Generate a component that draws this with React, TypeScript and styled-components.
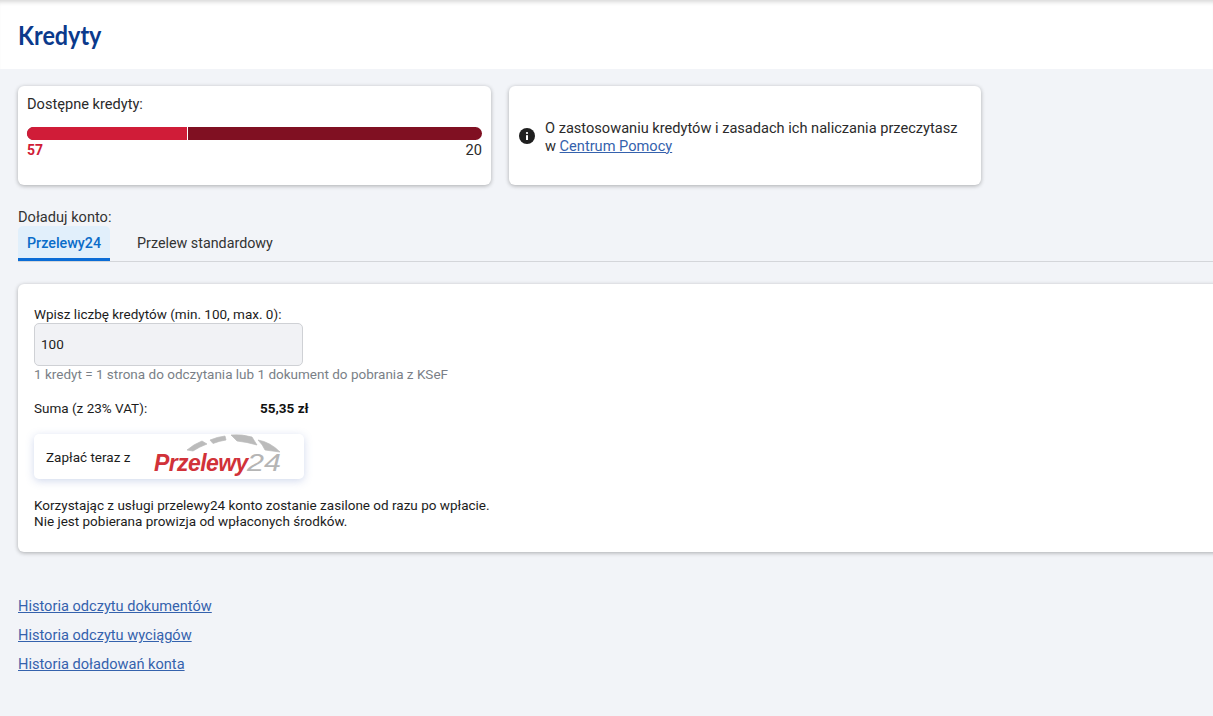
import React from "react";
import styled, { createGlobalStyle } from "styled-components";

const Global = createGlobalStyle`
  html, body { margin: 0; padding: 0; height: 716px; overflow: hidden; background: #f2f4f8; }
  body { font-family: Roboto, "Liberation Sans", sans-serif; font-size: 14.6px; color: #212529; }
`;

const Page = styled.div`
  width: 1213px;
  height: 716px;
  overflow: hidden;
  display: flex;
  flex-direction: column;
`;

const Header = styled.header`
  height: 69px;
  flex: none;
  box-sizing: border-box;
  background: #fff;
  padding: 18px 18px 0;
  box-shadow: inset 0 5px 4px -3px rgba(0, 0, 0, 0.16);
`;

const Title = styled.h1`
  margin: 0;
  font-family: Lato, sans-serif;
  font-size: 27px;
  line-height: 34px;
  font-weight: 700;
  color: #0b3a8c;
  transform: scaleX(0.865);
  transform-origin: left center;
`;

const Main = styled.main`
  padding: 17px 0 0 18px;
  display: flex;
  flex-direction: column;
`;

const TopRow = styled.div`
  display: flex;
  gap: 18px;
`;

const Card = styled.section`
  background: #fff;
  border-radius: 6px;
  box-shadow: 0 1px 4px rgba(0, 0, 0, 0.3);
  box-sizing: border-box;
`;

const CreditsCard = styled(Card)`
  width: 473px;
  height: 99px;
  padding: 10px 9px 0;
`;

const CardLabel = styled.div`
  line-height: 17px;
  color: #2b2b2b;
`;

const Bar = styled.div`
  display: flex;
  height: 13px;
  margin-top: 14px;
  border-radius: 7px;
  overflow: hidden;
  background: #801022;
`;

const BarUsed = styled.div`
  width: 160px;
  background: #d01c38;
  border-right: 1px solid #fff;
`;

const BarLabels = styled.div`
  display: flex;
  justify-content: space-between;
  line-height: 17px;
  margin-top: 2px;
`;

const Used = styled.span`
  color: #d01c38;
  font-weight: 700;
  font-size: 14px;
`;

const Total = styled.span`
  color: #2b2b2b;
`;

const InfoCard = styled(Card)`
  width: 472px;
  height: 99px;
  padding: 0 10px;
  display: flex;
  align-items: center;
  gap: 10px;
`;

const InfoText = styled.div`
  padding-top: 2px;
  line-height: 18px;
  color: #2b2b2b;
`;

const TextLink = styled.a`
  color: #3562ad;
  text-decoration: underline;
`;

const SectionLabel = styled.div`
  margin-top: 24px;
  line-height: 17px;
  color: #333;
`;

const Tabs = styled.div`
  display: flex;
  height: 36px;
  box-sizing: border-box;
  border-bottom: 1px solid #d4d6da;
  align-items: stretch;
`;

const Tab = styled.div<{ $active?: boolean }>`
  padding: 2px 9px 0;
  margin-right: 18px;
  display: flex;
  align-items: center;
  height: 35px;
  box-sizing: border-box;
  border-radius: 5px 5px 0 0;
  font-size: 14.3px;
  font-weight: ${(p) => (p.$active ? 500 : 400)};
  color: ${(p) => (p.$active ? "#0a6cc9" : "#333")};
  background: ${(p) => (p.$active ? "#e1effb" : "transparent")};
  border-bottom: 3px solid ${(p) => (p.$active ? "#0a6cd6" : "transparent")};
`;

const PayCard = styled(Card)`
  margin-top: 22px;
  margin-right: -20px;
  height: 268px;
  padding: 23px 16px 0;
  font-size: 13.5px;
`;

const FieldLabel = styled.label`
  display: block;
  line-height: 15px;
  color: #1c1c1c;
`;

const AmountInput = styled.input`
  display: block;
  margin-top: 1px;
  width: 269px;
  height: 43px;
  box-sizing: border-box;
  padding: 0 6px 2px;
  background: #f1f2f5;
  border: 1px solid #cfd1d5;
  border-radius: 5px;
  font: 13.5px Roboto, sans-serif;
  color: #222;
`;

const Hint = styled.div`
  line-height: 16px;
  color: #7a7f87;
`;

const SumRow = styled.div`
  display: flex;
  margin-top: 18px;
  line-height: 17px;
  color: #1c1c1c;
`;

const SumLabel = styled.span`
  width: 226px;
`;

const SumValue = styled.strong`
  font-weight: 700;
  color: #111;
`;

const PayButton = styled.button`
  display: flex;
  align-items: center;
  margin-top: 17px;
  width: 270px;
  height: 45px;
  padding: 0 0 0 12px;
  border: 0;
  border-radius: 5px;
  background: #fff;
  box-shadow: 0 2px 8px rgba(90, 120, 190, 0.28);
  font: 13.5px Roboto, sans-serif;
  color: #1c1c1c;
`;

const PayNote = styled.p`
  margin: 18px 0 0;
  line-height: 16px;
  color: #1c1c1c;
`;

const HistoryLinks = styled.nav`
  display: flex;
  flex-direction: column;
  align-items: flex-start;
  gap: 12px;
  margin-top: 46px;
  line-height: 17px;
`;

const LogoSvg = styled.svg`
  display: block;
  flex: none;
  margin-left: auto;
  margin-right: 19px;
`;

const InfoIcon = () => (
  <svg width="16" height="16" viewBox="0 0 16 16" style={{ flex: "none" }}>
    <circle cx="8" cy="8" r="8" fill="#1f1f1f" />
    <rect x="7" y="7.2" width="2" height="4.8" fill="#fff" />
    <circle cx="8" cy="5" r="1.1" fill="#fff" />
  </svg>
);

const P24Logo = () => (
  <LogoSvg width="132" height="45" viewBox="0 1 132 45">
    <g fill="#bbbbbb" stroke="#bbbbbb" strokeWidth="0.7" strokeLinejoin="round">
      <path d="M34 17 Q41 11 49 8 L54 11 Q46 14 40 18 Z" />
      <path d="M57 7 Q64 4 72 3 L73 7 Q66 8 60 10.5 Z" />
      <path d="M78 2 Q89 1 99 4 L104 12 Q94 9 84 8 Z" />
      <path d="M105 7 Q117 9 127 19 L112 17 Q110 12 105 7 Z" />
    </g>
    <text x="1" y="38" fontFamily="Liberation Sans, sans-serif" fontStyle="italic" fontWeight="700" fontSize="23" letterSpacing="-0.6" fill="#d13239">
      Przelewy
    </text>
    <text x="94" y="38" textLength="34" lengthAdjust="spacingAndGlyphs" fontFamily="Liberation Sans, sans-serif" fontStyle="italic" fontSize="23" fill="#b5b5b5">
      24
    </text>
  </LogoSvg>
);

export default function App() {
  return (
    <Page>
      <Global />
      <Header>
        <Title>Kredyty</Title>
      </Header>
      <Main>
        <TopRow>
          <CreditsCard>
            <CardLabel>Dostępne kredyty:</CardLabel>
            <Bar>
              <BarUsed />
            </Bar>
            <BarLabels>
              <Used>57</Used>
              <Total>20</Total>
            </BarLabels>
          </CreditsCard>
          <InfoCard>
            <InfoIcon />
            <InfoText>
              O zastosowaniu kredytów i zasadach ich naliczania przeczytasz
              <br />w <TextLink href="#">Centrum Pomocy</TextLink>
            </InfoText>
          </InfoCard>
        </TopRow>
        <SectionLabel>Doładuj konto:</SectionLabel>
        <Tabs>
          <Tab $active>Przelewy24</Tab>
          <Tab>Przelew standardowy</Tab>
        </Tabs>
        <PayCard>
          <FieldLabel>Wpisz liczbę kredytów (min. 100, max. 0):</FieldLabel>
          <AmountInput defaultValue="100" />
          <Hint>1 kredyt = 1 strona do odczytania lub 1 dokument do pobrania z KSeF</Hint>
          <SumRow>
            <SumLabel>Suma (z 23% VAT):</SumLabel>
            <SumValue>55,35 zł</SumValue>
          </SumRow>
          <PayButton>
            Zapłać teraz z
            <P24Logo />
          </PayButton>
          <PayNote>
            Korzystając z usługi przelewy24 konto zostanie zasilone od razu po wpłacie.
            <br />
            Nie jest pobierana prowizja od wpłaconych środków.
          </PayNote>
        </PayCard>
        <HistoryLinks>
          <TextLink href="#">Historia odczytu dokumentów</TextLink>
          <TextLink href="#">Historia odczytu wyciągów</TextLink>
          <TextLink href="#">Historia doładowań konta</TextLink>
        </HistoryLinks>
      </Main>
    </Page>
  );
}
